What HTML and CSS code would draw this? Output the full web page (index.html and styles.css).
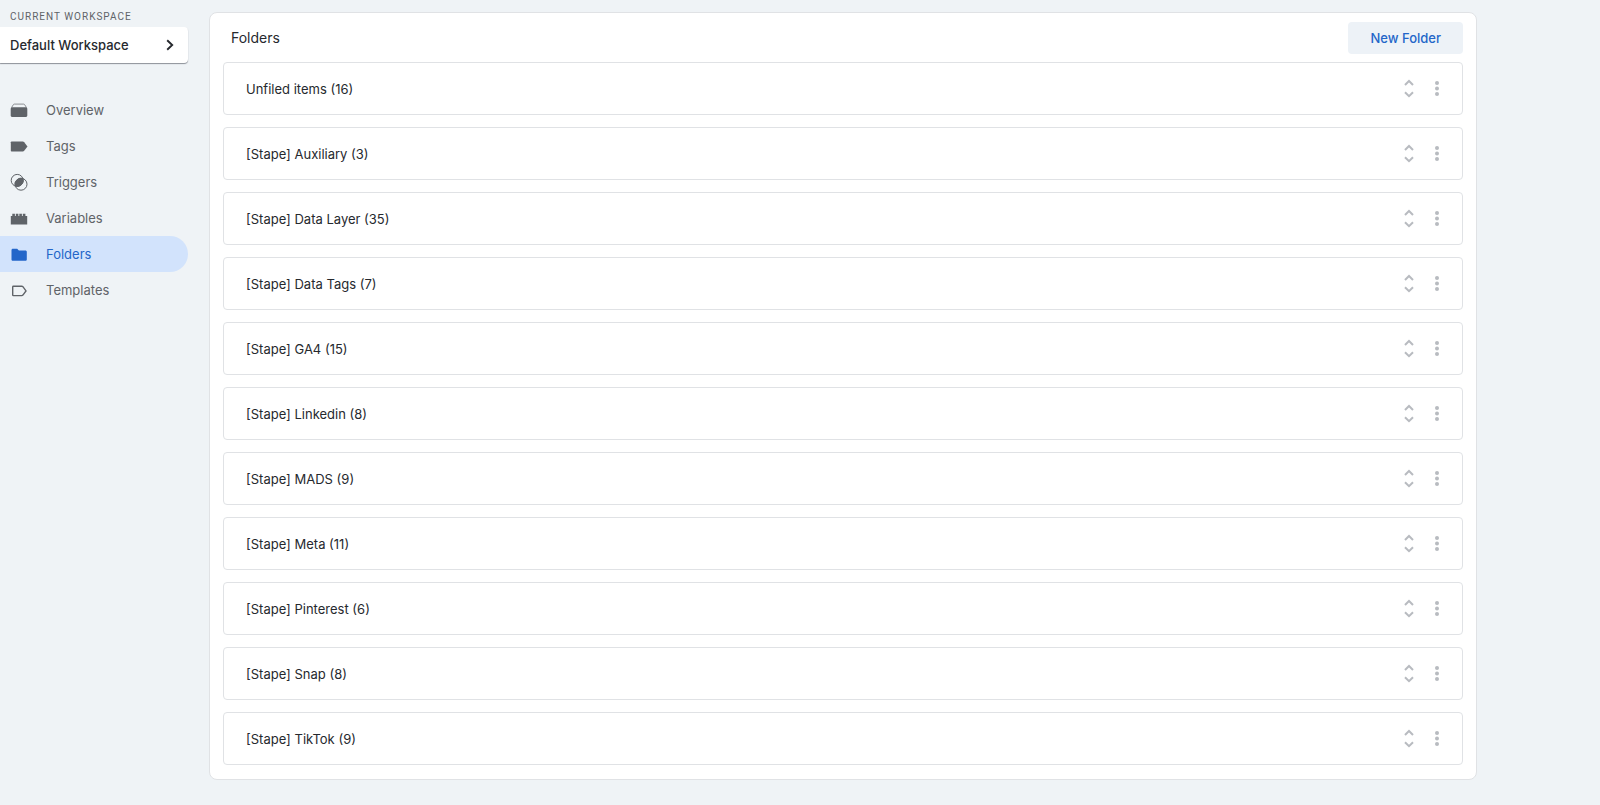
FILE: index.html
```html
<!DOCTYPE html>
<html lang="en">
	<head>
		<meta charset="UTF-8">
		<title>Folders</title>
		<link rel="stylesheet" href="styles.css">
	</head>
	<body>
		<svg class="sprite" aria-hidden="true">
			<symbol id="icon-sort" viewBox="0 0 18 20">
				<path d="M5 6l4-4 4 4M5 13.2l4 4 4-4" fill="none" stroke="currentColor" stroke-width="2"/>
			</symbol>
			<symbol id="icon-more" viewBox="0 0 18 20">
				<circle cx="9" cy="4" r="2" fill="currentColor"/>
				<circle cx="9" cy="9.5" r="2" fill="currentColor"/>
				<circle cx="9" cy="15" r="2" fill="currentColor"/>
			</symbol>
		</svg>

		<aside class="sidebar">
			<div class="workspace-label" id="workspaceLabel">CURRENT WORKSPACE</div>
			<button class="workspace-btn" type="button" aria-describedby="workspaceLabel">
				<span>Default Workspace</span>
				<svg class="workspace-arrow" viewBox="0 0 12 12"><path d="M3.2 1.2L8.2 6l-5 4.8" fill="none" stroke="currentColor" stroke-width="1.9"/></svg>
			</button>
			<nav class="nav">
				<a class="nav-item" href="#overview">
					<svg class="nav-icon" viewBox="0 0 18 18"><path d="M1.5 6.6l1.9-3c.2-.3.5-.5.9-.5h9.4c.4 0 .7.2.9.5l1.9 3" fill="none" stroke="currentColor" stroke-width="1" opacity=".7"/><path d="M2.4 6.2h13.2c1 0 1.7.7 1.7 1.7v6.7c0 .8-.5 1.3-1.3 1.3H2c-.8 0-1.3-.5-1.3-1.3V7.9c0-1 .7-1.7 1.7-1.7z" fill="currentColor"/></svg>
					<span>Overview</span>
				</a>
				<a class="nav-item" href="#tags">
					<svg class="nav-icon" viewBox="0 0 18 18"><path d="M1.6 4.5h11.2c.6 0 1 .2 1.4.7L17.5 9.5l-3.3 4.3c-.4.5-.8.7-1.4.7H1.6c-.5 0-.8-.3-.8-.8V5.3c0-.5.3-.8.8-.8z" fill="currentColor"/></svg>
					<span>Tags</span>
				</a>
				<a class="nav-item" href="#triggers">
					<svg class="nav-icon" viewBox="0 0 18 18"><circle cx="7.2" cy="7.4" r="6" fill="none" stroke="currentColor"/><circle cx="11" cy="11.2" r="6" fill="none" stroke="currentColor"/><path d="M13 5.6A6 6 0 0 0 5.3 13 6 6 0 0 0 13 5.6z" fill="currentColor" stroke="currentColor"/></svg>
					<span>Triggers</span>
				</a>
				<a class="nav-item" href="#variables">
					<svg class="nav-icon" viewBox="0 0 18 18"><path d="M.8 15.4V7h1.5V4.8h2.6V7h.9V4.8h2.6V7h.9V4.8h2.6V7h.9V4.8h2.6V7h1.8v8.4z" fill="currentColor"/></svg>
					<span>Variables</span>
				</a>
				<a class="nav-item active" href="#folders" aria-current="page">
					<svg class="nav-icon" viewBox="0 0 18 18"><path d="M2.8 3.8h4.4l1.7 1.7h6.6c.7 0 1.3.6 1.3 1.3v7.7c0 .7-.6 1.3-1.3 1.3H2.8c-.7 0-1.3-.6-1.3-1.3V5.1c0-.7.6-1.3 1.3-1.3z" fill="currentColor"/></svg>
					<span>Folders</span>
				</a>
				<a class="nav-item" href="#templates">
					<svg class="nav-icon" viewBox="0 0 18 18"><path d="M3.4 5.2h8.4c.5 0 .8.2 1.1.5L16 9.9l-3.1 4.2c-.3.3-.6.5-1.1.5H3.4c-.4 0-.7-.3-.7-.7v-8c0-.4.3-.7.7-.7z" fill="none" stroke="currentColor" stroke-width="1.4"/></svg>
					<span>Templates</span>
				</a>
			</nav>
		</aside>

		<main class="panel">
			<div class="panel-head">
				<h1 class="panel-title">Folders</h1>
				<button class="new-btn" type="button">New Folder</button>
			</div>
			<ul class="folder-list" id="folderList"></ul>
		</main>

		<script src="folders.js"></script>
	</body>
</html>
```

FILE: styles.css
```css
* {
	box-sizing: border-box;
	margin: 0;
	padding: 0;
}

body {
	display: flex;
	align-items: flex-start;
	min-height: 100vh;
	background-color: #eff3f6;
	color: #26292e;
	font-family: Inter, "Liberation Sans", sans-serif;
	font-size: 13px;
	line-height: 20px;
}

button {
	border: none;
	font: inherit;
	cursor: pointer;
}

.sprite {
	display: none;
}

/* sidebar */
.sidebar {
	flex: none;
	width: 188px;
	padding-top: 7px;
}

.workspace-label {
	padding-left: 10px;
	color: #5f6368;
	font-family: Roboto, sans-serif;
	font-size: 10px;
	letter-spacing: 1px;
}

.workspace-btn {
	display: flex;
	align-items: center;
	justify-content: space-between;
	width: 100%;
	height: 36px;
	padding: 0 12px 0 10px;
	border-radius: 0 4px 4px 0;
	background-color: #fff;
	box-shadow: 0 1px 1px rgba(60, 64, 77, 0.55);
	color: #26292e;
	font-weight: 500;
}

.workspace-arrow {
	width: 12px;
	height: 12px;
}

.nav {
	margin-top: 29px;
}

.nav-item {
	display: flex;
	align-items: center;
	gap: 18px;
	height: 36px;
	padding-left: 10px;
	border-radius: 0 18px 18px 0;
	color: #5f6368;
	text-decoration: none;
}

.nav-item.active {
	background-color: #d2e3fc;
	color: #2366c9;
}

.nav-icon {
	width: 18px;
	height: 18px;
}

/* folders panel */
.panel {
	flex: 1;
	margin: 12px 123px 24px 21px;
	padding: 9px 13px 14px;
	border: 1px solid #e0e2e5;
	border-radius: 8px;
	background-color: #fff;
}

.panel-head {
	display: flex;
	align-items: center;
	justify-content: space-between;
	height: 32px;
	padding-left: 8px;
}

.panel-title {
	font-size: 14px;
	font-weight: 400;
}

.new-btn {
	height: 32px;
	padding: 0 22px;
	border-radius: 4px;
	background-color: #edf2f7;
	color: #2366c9;
	font-weight: 500;
}

.folder-list {
	display: grid;
	gap: 12px;
	margin-top: 8px;
	list-style: none;
}

.folder-item {
	display: flex;
	align-items: center;
	height: 53px;
	padding: 0 16px 0 22px;
	border: 1px solid #e0e2e5;
	border-radius: 4px;
}

.folder-name {
	flex: 1;
}

.folder-btn {
	width: 18px;
	height: 20px;
	margin-left: 10px;
	background: none;
	color: #b8bbc0;
}

.folder-btn svg {
	display: block;
	width: 18px;
	height: 20px;
}
```

FILE: folders.js
```js
var folders = [
	["Unfiled items", 16],
	["[Stape] Auxiliary", 3],
	["[Stape] Data Layer", 35],
	["[Stape] Data Tags", 7],
	["[Stape] GA4", 15],
	["[Stape] Linkedin", 8],
	["[Stape] MADS", 9],
	["[Stape] Meta", 11],
	["[Stape] Pinterest", 6],
	["[Stape] Snap", 8],
	["[Stape] TikTok", 9]
];

function createBtn(icon, label) {
	return '<button class="folder-btn" type="button" aria-label="' + label + '"><svg><use href="#' + icon + '"></use></svg></button>';
}

var html = "";
for (var i = 0; i < folders.length; i++) {
	html += '<li class="folder-item"><span class="folder-name">' + folders[i][0] + " (" + folders[i][1] + ")</span>" +
		createBtn("icon-sort", "Expand") + createBtn("icon-more", "More") + "</li>";
}
document.getElementById("folderList").innerHTML = html;
```
